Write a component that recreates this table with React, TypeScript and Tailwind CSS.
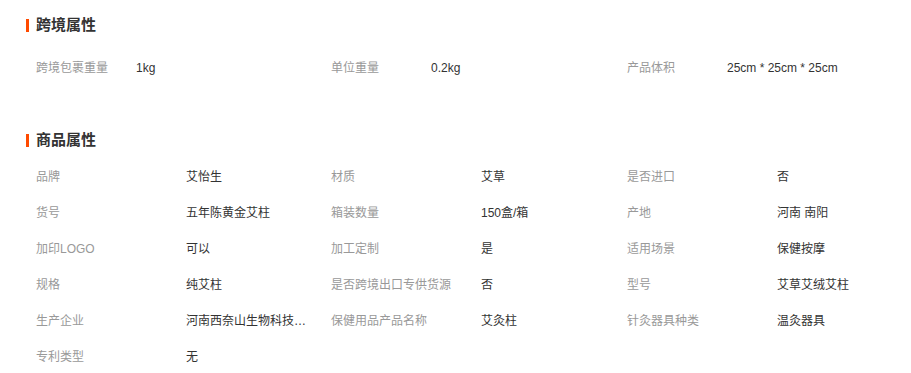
const font = { fontFamily: '"Liberation Sans", "Noto Sans CJK SC", sans-serif' };

type Item = [string, string];

const crossBorder: Item[] = [
  ['跨境包裹重量', '1kg'],
  ['单位重量', '0.2kg'],
  ['产品体积', '25cm * 25cm * 25cm'],
];

const product: Item[] = [
  ['品牌', '艾怡生'],
  ['材质', '艾草'],
  ['是否进口', '否'],
  ['货号', '五年陈黄金艾柱'],
  ['箱装数量', '150盒/箱'],
  ['产地', '河南 南阳'],
  ['加印LOGO', '可以'],
  ['加工定制', '是'],
  ['适用场景', '保健按摩'],
  ['规格', '纯艾柱'],
  ['是否跨境出口专供货源', '否'],
  ['型号', '艾草艾绒艾柱'],
  ['生产企业', '河南西奈山生物科技有限公司'],
  ['保健用品产品名称', '艾灸柱'],
  ['针灸器具种类', '温灸器具'],
  ['专利类型', '无'],
];

function Title({ text }: { text: string }) {
  return (
    <div className="flex items-center h-5 pl-[26px]">
      <span className="w-[3px] h-[13px] bg-[#ff4a00]" />
      <h3 className="ml-[7px] text-[15px] font-bold text-[#333]">{text}</h3>
    </div>
  );
}

export default function App() {
  return (
    <div className="bg-white w-[911px] h-[373px] overflow-hidden pt-[15px] text-xs" style={font}>
      <Title text="跨境属性" />
      <div className="grid grid-cols-[295px_296px_295px] pl-9 mt-[15px]">
        {crossBorder.map(([k, v]) => (
          <div key={k} className="flex items-center h-9">
            <span className="w-[100px] shrink-0 text-[#999]">{k}</span>
            <span className="text-[#333] whitespace-nowrap">{v}</span>
          </div>
        ))}
      </div>

      <div className="mt-[44px]">
        <Title text="商品属性" />
      </div>
      <div className="grid grid-cols-[295px_296px_295px] pl-9 mt-[9px]">
        {product.map(([k, v]) => (
          <div key={k} className="flex items-center h-9">
            <span className="w-[150px] shrink-0 text-[#999] whitespace-nowrap">{k}</span>
            <span className="w-[128px] text-[#333] truncate">{v}</span>
          </div>
        ))}
      </div>
    </div>
  );
}
